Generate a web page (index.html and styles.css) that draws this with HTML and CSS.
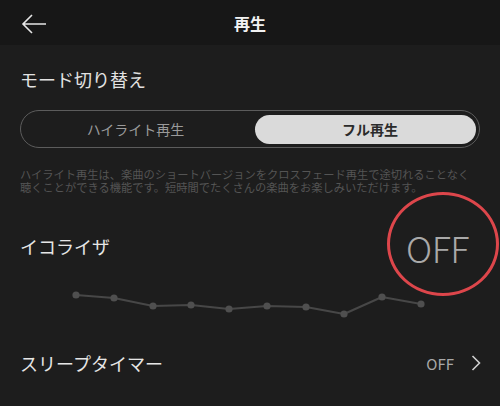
FILE: index.html
```html
<!DOCTYPE html>
<html lang="ja">
<head>
<meta charset="utf-8">
<link rel="stylesheet" href="styles.css">
</head>
<body>
<div class="screen">
  <header class="topbar">
    <svg class="back" width="26" height="20" viewBox="0 0 26 20">
      <path d="M25 10H2M11 1L2 10l9 9" fill="none" stroke="#e6e6e6" stroke-width="1.6"/>
    </svg>
    <h1 class="title">再生</h1>
  </header>
  <main class="content">
    <h2 class="section-title">モード切り替え</h2>
    <div class="segment">
      <div class="seg-item">ハイライト再生</div>
      <div class="seg-item active">フル再生</div>
    </div>
    <p class="desc">ハイライト再生は、楽曲のショートバージョンをクロスフェード再生で途切れることなく<br>聴くことができる機能です。短時間でたくさんの楽曲をお楽しみいただけます。</p>
    <div class="row eq-row">
      <span class="label">イコライザ</span>
      <span class="big-off">OFF</span>
      <span class="ring"></span>
    </div>
    <svg class="eq" width="370" height="32" viewBox="70 288 370 32">
      <polyline points="76,295 114,298 153,306 191,305 229,309 267,306 306,307 344,314 382,297 421,304" fill="none" stroke="#474747" stroke-width="2" stroke-linejoin="round"/>
      <g fill="#4f4f4f">
        <circle cx="76" cy="295" r="3.6"/>
        <circle cx="114" cy="298" r="3.6"/>
        <circle cx="153" cy="306" r="3.6"/>
        <circle cx="191" cy="305" r="3.6"/>
        <circle cx="229" cy="309" r="3.6"/>
        <circle cx="267" cy="306" r="3.6"/>
        <circle cx="306" cy="307" r="3.6"/>
        <circle cx="344" cy="314" r="3.6"/>
        <circle cx="382" cy="297" r="3.6"/>
        <circle cx="421" cy="304" r="3.6"/>
      </g>
    </svg>
    <div class="row sleep-row">
      <span class="label">スリープタイマー</span>
      <span class="value">OFF
        <svg class="chev" width="10" height="16" viewBox="0 0 10 16"><path d="M1.5 1l7 7-7 7" fill="none" stroke="#cfcfcf" stroke-width="1.6"/></svg>
      </span>
    </div>
  </main>
</div>
</body>
</html>
```

FILE: styles.css
```css
* { box-sizing: border-box; margin: 0; padding: 0; }
html, body { background: #1d1d1d; }
body {
  width: 500px;
  height: 406px;
  overflow: hidden;
  font-family: "Noto Sans CJK JP", "Noto Sans", sans-serif;
  color: #e4e4e4;
}
.screen { position: relative; width: 500px; height: 406px; }
.topbar {
  position: relative;
  height: 45px;
  background: #171717;
  display: flex;
  align-items: center;
  justify-content: center;
}
.back { position: absolute; left: 21px; top: 14px; }
.title {
  font-size: 16px;
  font-weight: 700;
  color: #f2f2f2;
  line-height: 20px;
  margin-top: 1px;
}
.content { padding: 0 20px; }
.section-title {
  margin-top: 22px;
  font-size: 18px;
  font-weight: 400;
  line-height: 24px;
  color: #e2e2e2;
}
.segment {
  margin-top: 19px;
  height: 38px;
  border: 1.5px solid #5c5c5c;
  border-radius: 19px;
  display: flex;
  padding: 3.5px 3.5px;
}
.seg-item {
  flex: 1;
  display: flex;
  align-items: center;
  justify-content: center;
  font-size: 14px;
  color: #9a9a9a;
  border-radius: 15px;
  padding-right: 8px;
}
.seg-item.active {
  background: #dadada;
  color: #2b2b2b;
  font-weight: 700;
  padding-right: 0;
  padding-left: 10px;
  flex: 0 0 221px;
}
.desc {
  margin-top: 19.5px;
  font-size: 11.25px;
  line-height: 13px;
  color: #545454;
  white-space: nowrap;
}
.row {
  display: flex;
  align-items: center;
  justify-content: space-between;
}
.label { font-size: 18px; line-height: 24px; color: #e6e6e6; }
.eq-row {
  position: relative;
  margin-top: 40.5px;
  height: 24px;
}
.big-off {
  font-size: 36px;
  font-weight: 300;
  line-height: 24px;
  color: #a9a9a9;
  margin-right: 11px;
  margin-top: 2px;
  letter-spacing: -0.5px;
}
.ring {
  position: absolute;
  left: 367px;
  top: -42px;
  width: 112px;
  height: 104px;
  border: 3.5px solid #dd464b;
  border-radius: 50%;
}
.eq { display: block; margin-top: 30px; margin-left: 50px; }
.sleep-row { margin-top: 31px; height: 24px; }
.value {
  display: flex;
  align-items: center;
  gap: 17px;
  font-size: 15px;
  color: #a8a8a8;
  margin-right: -1px;
}
.chev { display: block; }
```
